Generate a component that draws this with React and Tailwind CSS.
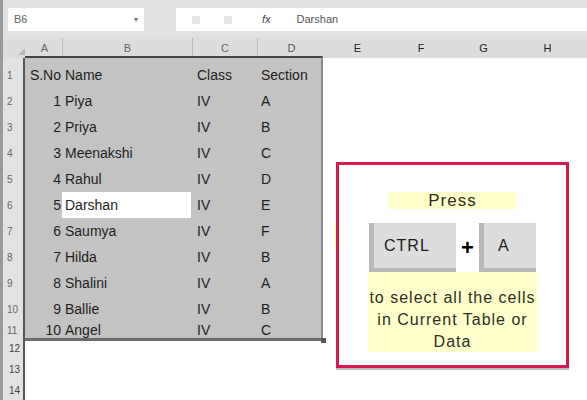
import React from 'react';

const rows = [
    { no: 'S.No', name: 'Name', cls: 'Class', sec: 'Section', head: true },
    { no: '1', name: 'Piya', cls: 'IV', sec: 'A' },
    { no: '2', name: 'Priya', cls: 'IV', sec: 'B' },
    { no: '3', name: 'Meenakshi', cls: 'IV', sec: 'C' },
    { no: '4', name: 'Rahul', cls: 'IV', sec: 'D' },
    { no: '5', name: 'Darshan', cls: 'IV', sec: 'E', active: true },
    { no: '6', name: 'Saumya', cls: 'IV', sec: 'F' },
    { no: '7', name: 'Hilda', cls: 'IV', sec: 'B' },
    { no: '8', name: 'Shalini', cls: 'IV', sec: 'A' },
    { no: '9', name: 'Ballie', cls: 'IV', sec: 'B' },
    { no: '10', name: 'Angel', cls: 'IV', sec: 'C' },
];

const heights = ['h-[30px] pt-1', 'h-[26px]', 'h-[26px]', 'h-[26px]', 'h-[26px]', 'h-[26px]', 'h-[26px]', 'h-[26px]', 'h-[26px]', 'h-[26px]', 'h-[16px]'];

const Key = ({ label, w, pl }) => (
    <div className={`${w} ${pl} h-[49px] bg-[#dddddd] border-l-[5px] border-b-[4px] border-[#b9b9b9] flex items-center text-[16px] tracking-[1px] text-[#1c1c1c]`}>
        {label}
    </div>
);

export default function App() {
    return (
        <div className="w-[587px] h-[400px] bg-white relative overflow-hidden" style={{ fontFamily: '"Liberation Sans", Arial, sans-serif' }}>
            {/* formula bar */}
            <div className="h-[38px] bg-[#e1e1e1] flex items-start pt-[8px] border-l-[3px] border-[#9a9a9a]">
                <div className="ml-[5px] w-[136px] h-[23px] bg-white flex items-center justify-between px-[6px]">
                    <span className="text-[11px] text-[#666]">B6</span>
                    <span className="text-[8px] text-[#777]">▾</span>
                </div>
                <div className="ml-[32px] flex-1 h-[23px] bg-white flex items-center">
                    <div className="w-[8px] h-[8px] bg-[#e4e4e4] ml-[16px]"></div>
                    <div className="w-[8px] h-[8px] bg-[#e4e4e4] ml-[24px]"></div>
                    <span className="ml-[30px] text-[11px] italic text-[#444]">fx</span>
                    <span className="ml-[26px] text-[11px] text-[#555]">Darshan</span>
                </div>
            </div>

            {/* column headers */}
            <div className="h-[20px] bg-[#dddddd] flex text-[11px] text-[#666] border-l-[3px] border-[#9a9a9a]">
                <div className="w-[24px] flex items-end justify-end pb-[3px] pr-[2px]">
                    <div className="w-0 h-0 border-l-[7px] border-l-transparent border-b-[7px] border-b-[#b8b8b8]"></div>
                </div>
                <div className="w-[36px] flex items-center justify-center border-r border-[#bdbdbd]">A</div>
                <div className="w-[130px] flex items-center justify-center border-r border-[#bdbdbd]">B</div>
                <div className="w-[65px] flex items-center justify-center border-r border-[#bdbdbd]">C</div>
                <div className="w-[67px] flex items-center justify-center text-[#555]">D</div>
                <div className="w-[65px] flex items-center justify-center text-[#222]">E</div>
                <div className="w-[62px] flex items-center justify-center text-[#222]">F</div>
                <div className="w-[63px] flex items-center justify-center text-[#222]">G</div>
                <div className="w-[65px] flex items-center justify-center text-[#222]">H</div>
            </div>

            {/* grid */}
            <div className="flex">
                <div className="w-[25px] bg-[#e2e2e2] border-l-[3px] border-[#9a9a9a] border-r-2 border-r-[#555] flex flex-col text-[10px] text-[#666]">
                    {rows.map((r, i) => (
                        <div key={i} className={`${heights[i]} flex items-center pl-[4px]`}>{i + 1}</div>
                    ))}
                    <div className="h-[21px] flex items-center pl-[6px] text-[#444]">12</div>
                    <div className="h-[21px] flex items-center pl-[6px] text-[#444]">13</div>
                    <div className="h-[20px] flex items-center pl-[6px] text-[#444]">14</div>
                </div>
                <div className="flex flex-col">
                    <div className="w-[298px] bg-[#c3c3c3] border-t-2 border-[#444] border-b-[3px] border-b-[#6b6b6b] border-r-2 border-r-[#8a8a8a] text-[14px] text-[#1e1e1e] -mt-[2px]">
                        {rows.map((r, i) => (
                            <div key={i} className={`${heights[i]} flex items-center`}>
                                <div className="w-[37px] text-right pr-[1px] leading-none">{r.no}</div>
                                <div className={`w-[129px] pl-[3px] h-full flex items-center ${r.active ? 'bg-white' : ''}`}>{r.name}</div>
                                <div className="w-[65px] pl-[6px]">{r.cls}</div>
                                <div className="w-[65px] pl-[5px]">{r.sec}</div>
                            </div>
                        ))}
                    </div>
                    <div className="flex">
                        <div className="w-[296px]"></div>
                        <div className="w-[5px] h-[5px] bg-[#555] -mt-[3px]"></div>
                    </div>
                </div>
            </div>

            {/* yellow cell peeking behind callout */}
            <div className="absolute left-[334px] top-[222px] w-[10px] h-[28px] bg-[#ffffcc]"></div>

            {/* callout */}
            <div className="absolute left-[336px] top-[162px] w-[233px] h-[206px] bg-white border-[3px] border-[#d8174a] shadow-[0_2px_0_#bdbdbd] flex flex-col items-center">
                <div className="mt-[27px] w-[129px] h-[17px] bg-[#ffffcc] flex items-center justify-center text-[17px] tracking-[1px] text-[#2c2f1c]">Press</div>
                <div className="mt-[14px] flex items-center">
                    <Key label="CTRL" w="w-[87px]" pl="pl-[10px]" />
                    <div className="w-[23px] text-center text-[22px] font-bold text-black leading-none">+</div>
                    <Key label="A" w="w-[57px]" pl="pl-[14px]" />
                </div>
                <div className="w-[170px] h-[80px] bg-[#ffffcc] text-center text-[16px] tracking-[1px] leading-[22px] text-[#2c2f1c] pt-[15px]">
                    to select all the cells in Current Table or Data
                </div>
            </div>
        </div>
    );
}
